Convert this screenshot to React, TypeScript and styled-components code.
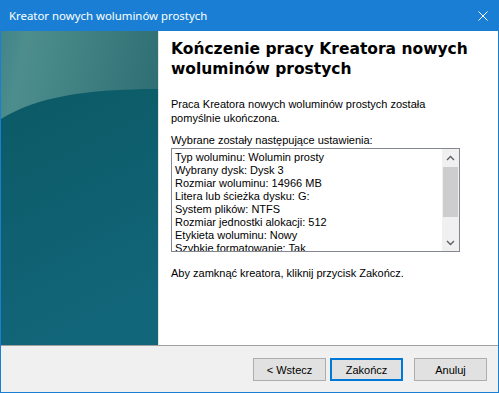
import styled, { createGlobalStyle } from "styled-components";

const GlobalStyle = createGlobalStyle`
  html, body {
    margin: 0;
    padding: 0;
    background: #ffffff;
  }
`;

const Window = styled.div`
  width: 499px;
  height: 393px;
  box-sizing: border-box;
  border: 1px solid #1a7fd4;
  border-top: none;
  display: flex;
  flex-direction: column;
  font-family: "Liberation Sans", Arial, sans-serif;
  background: #ffffff;
`;

const TitleBar = styled.div`
  height: 31px;
  margin: 0 -1px;
  background: #1a7fd4;
  display: flex;
  align-items: center;
  justify-content: space-between;
  padding: 0 10px 0 9px;
  color: #ffffff;
  font-family: "Noto Sans", "Open Sans", sans-serif;
  font-size: 11.4px;
`;

const CloseIcon = styled.svg`
  width: 10px;
  height: 10px;
  margin-right: 1px;
`;

const Body = styled.div`
  flex: 1;
  display: flex;
  min-height: 0;
`;

const SidePanel = styled.svg`
  width: 157px;
  height: 314px;
  display: block;
  flex-shrink: 0;
`;

const Separator = styled.div`
  width: 1px;
  background: #e6e6e6;
`;

const Content = styled.div`
  flex: 1;
  padding: 8px 0 0 12px;
  display: flex;
  flex-direction: column;
`;

const Heading = styled.h1`
  margin: 0;
  font-family: "DejaVu Sans", Verdana, sans-serif;
  font-weight: bold;
  font-size: 15.5px;
  line-height: 20px;
  color: #000000;
`;

const Text = styled.p<{ $gap: number }>`
  margin: ${(p) => p.$gap}px 0 0 0;
  font-size: 11px;
  line-height: 14px;
  color: #000000;
`;

const ListBox = styled.div`
  margin-top: 1px;
  width: 289px;
  height: 104px;
  box-sizing: border-box;
  border: 1px solid #828790;
  display: flex;
  overflow: hidden;
`;

const ListItems = styled.div`
  flex: 1;
  padding: 2px 0 0 3px;
  font-size: 11px;
  line-height: 13px;
  color: #000000;
  overflow: hidden;
`;

const ScrollBar = styled.div`
  width: 17px;
  background: #f0f0f0;
  display: flex;
  flex-direction: column;
`;

const ScrollArrow = styled.div`
  height: 17px;
  display: flex;
  align-items: center;
  justify-content: center;
`;

const ScrollTrack = styled.div`
  flex: 1;
  padding: 1px 1px;
  display: flex;
  flex-direction: column;
`;

const ScrollThumb = styled.div`
  height: 50px;
  background: #cdcdcd;
`;

const Footer = styled.div`
  height: 47px;
  box-sizing: border-box;
  background: #f0f0f0;
  border-top: 1px solid #a0a0a0;
  display: flex;
  justify-content: flex-end;
  align-items: flex-start;
  padding: 12px 11px 0 0;
`;

const Button = styled.button<{ $primary?: boolean; $gap: number }>`
  width: 73px;
  height: 23px;
  margin-left: ${(p) => p.$gap}px;
  box-sizing: border-box;
  background: #e1e1e1;
  border: ${(p) => (p.$primary ? "2px solid #0078d7" : "1px solid #adadad")};
  font-family: "Liberation Sans", Arial, sans-serif;
  font-size: 11px;
  color: #000000;
  padding: 0;
`;

const settings = [
  "Typ woluminu: Wolumin prosty",
  "Wybrany dysk: Dysk 3",
  "Rozmiar woluminu: 14966 MB",
  "Litera lub ścieżka dysku: G:",
  "System plików: NTFS",
  "Rozmiar jednostki alokacji: 512",
  "Etykieta woluminu: Nowy",
  "Szybkie formatowanie: Tak",
];

function Chevron({ up }: { up?: boolean }) {
  return (
    <svg width="9" height="6" viewBox="0 0 9 6">
      <path
        d={up ? "M1 5 L4.5 1.5 L8 5" : "M1 1 L4.5 4.5 L8 1"}
        fill="none"
        stroke="#606060"
        strokeWidth="1.4"
      />
    </svg>
  );
}

function App() {
  return (
    <>
      <GlobalStyle />
      <Window>
        <TitleBar>
          <span>Kreator nowych woluminów prostych</span>
          <CloseIcon viewBox="0 0 10 10">
            <path d="M0.5 0.5 L9.5 9.5 M9.5 0.5 L0.5 9.5" stroke="#ffffff" strokeWidth="1" />
          </CloseIcon>
        </TitleBar>
        <Body>
          <SidePanel viewBox="0 0 157 314" preserveAspectRatio="none">
            <defs>
              <linearGradient id="topG" x1="0" y1="0" x2="1" y2="0.4">
                <stop offset="0" stopColor="#41848a" />
                <stop offset="0.15" stopColor="#4d8e8d" />
                <stop offset="1" stopColor="#2c6c72" />
              </linearGradient>
              <linearGradient id="botG" x1="0" y1="0" x2="0.3" y2="1">
                <stop offset="0" stopColor="#0b5965" />
                <stop offset="1" stopColor="#126679" />
              </linearGradient>
            </defs>
            <rect x="0" y="0" width="157" height="314" fill="url(#topG)" />
            <path d="M0 88 C 35 66 85 58 157 58 L157 314 L0 314 Z" fill="url(#botG)" />
          </SidePanel>
          <Separator />
          <Content>
            <Heading>
              Kończenie pracy Kreatora nowych
              <br />
              woluminów prostych
            </Heading>
            <Text $gap={18}>
              Praca Kreatora nowych woluminów prostych została
              <br />
              pomyślnie ukończona.
            </Text>
            <Text $gap={8}>Wybrane zostały następujące ustawienia:</Text>
            <ListBox>
              <ListItems>
                {settings.map((s) => (
                  <div key={s}>{s}</div>
                ))}
              </ListItems>
              <ScrollBar>
                <ScrollArrow>
                  <Chevron up />
                </ScrollArrow>
                <ScrollTrack>
                  <ScrollThumb />
                </ScrollTrack>
                <ScrollArrow>
                  <Chevron />
                </ScrollArrow>
              </ScrollBar>
            </ListBox>
            <Text $gap={14}>Aby zamknąć kreatora, kliknij przycisk Zakończ.</Text>
          </Content>
        </Body>
        <Footer>
          <Button $gap={0}>&lt; Wstecz</Button>
          <Button $gap={4} $primary>
            Zakończ
          </Button>
          <Button $gap={11}>Anuluj</Button>
        </Footer>
      </Window>
    </>
  );
}

export default App;
